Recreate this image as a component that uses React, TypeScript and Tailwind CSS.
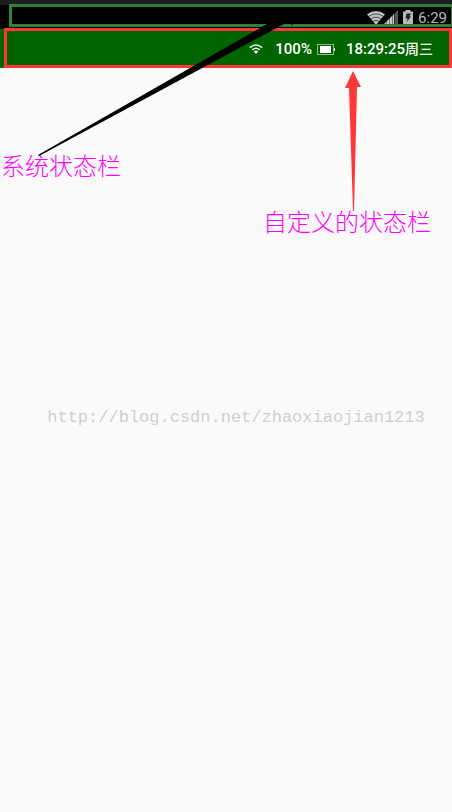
function SystemWifi() {
  return (
    <svg className="h-[14px] w-[18px]" viewBox="0 0 18 14" aria-hidden="true">
      <path d="M0 3.2Q9-3 18 3.2L9 14Z" fill="#c0c0c0" />
      <path
        d="M1.5 5.4Q9 .4 16.5 5.4M3.6 8Q9 4.2 14.4 8M5.6 10.4Q9 8 12.4 10.4"
        fill="none"
        stroke="#222"
        strokeWidth="0.7"
      />
    </svg>
  );
}

function SystemSignal() {
  return (
    <svg className="-ml-px h-[15px] w-[14px]" viewBox="0 0 14 15" aria-hidden="true">
      <path d="M0 15V14L2 12V15ZM3 15V11L5 9V15ZM6 15V8L8 6V15ZM9 15V5L10 4V15Z" fill="#c8c8c8" />
      <path d="M2 15V12L3 11V15ZM5 15V9L6 8V15ZM8 15V6L9 5V15Z" fill="#777" />
      <path d="M10.500 15V3.500L14 0V15Z" fill="#555" />
    </svg>
  );
}

function SystemBattery() {
  return (
    <svg className="h-[15px] w-[10px]" viewBox="0 0 10 15" aria-hidden="true">
      <path d="M0 1.500H2.500V0H7.500V1.500H10V15H0Z" fill="#b8b8b8" />
      <path d="M3.500 3.500H8L6.500 6.500H8L3.800 12L4.600 8.400H2.500Z" fill="#222" />
    </svg>
  );
}

function SystemBar() {
  return (
    <div className="flex h-[29px] flex-col bg-black">
      <div className="h-[5px] bg-[#1c1c22]" />
      <div className="flex h-6 items-center justify-end pt-px pr-[5px] text-[#b8b8b8]">
        <SystemWifi />
        <SystemSignal />
        <span className="ml-[5px] flex">
          <SystemBattery />
        </span>
        <span className="ml-[5px] text-[15px] leading-6">6:29</span>
      </div>
    </div>
  );
}

function CustomBar() {
  return (
    <div className="flex h-[39px] items-center justify-end bg-[#006400] pt-px pr-[19px] text-[15px] font-medium text-white">
      <svg className="mr-3 h-[10px] w-[14px]" viewBox="0 0 14 10" aria-hidden="true">
        <path
          d="M.8 3.600Q7-1.600 13.200 3.600M3.200 6Q7 2.600 10.800 6"
          fill="none"
          stroke="#e8f2e8"
          strokeWidth="1.500"
        />
        <path d="M4.800 7.500Q7 5.700 9.200 7.500L7 10Z" fill="#fff" />
      </svg>
      <span>100%</span>
      <svg className="mr-[11px] ml-[5px] h-[11px] w-[18px]" viewBox="0 0 18 11" aria-hidden="true">
        <rect x="0.500" y="0.500" width="16" height="10" fill="none" stroke="#8dba8d" />
        <rect x="3" y="2" width="11" height="7" fill="#fff" />
        <rect x="17" y="4" width="1" height="3" fill="#fff" />
      </svg>
      <span>
        18:29:25<span className="text-sm">周三</span>
      </span>
    </div>
  );
}

export default function App() {
  return (
    <main className="relative min-h-screen overflow-hidden bg-[#fafafa] font-[Roboto,'Noto_Sans_CJK_SC',sans-serif]">
      <SystemBar />
      <CustomBar />

      {/* frames around the two bars */}
      <div className="absolute top-1 -right-[2px] left-[9px] h-[23px] border-3 border-[#328232]" />
      <div className="absolute top-7 right-0 left-1 h-10 border-3 border-[#ff3737]" />

      {/* pointers */}
      <svg className="absolute top-0 left-0 h-[160px] w-[300px]" viewBox="0 0 300 160" aria-hidden="true">
        <path d="M38 155L267 24L274 20H291L284 24L39 156Z" fill="#000" />
        <path d="M290 23H294L292 25Z" fill="#000" />
      </svg>
      <svg className="absolute top-[71px] right-[91px] h-[140px] w-4" viewBox="0 0 16 140" aria-hidden="true">
        <path d="M8 0L16 16H12L9 140H8L4 17H0Z" fill="#ff3737" />
      </svg>

      <div className="text-2xl leading-8 font-light text-[#ff00ff]">
        <p className="mt-[83px] pl-px">系统状态栏</p>
        <p className="mt-6 pr-[21px] text-right">自定义的状态栏</p>
      </div>

      <p className="mt-[167px] pl-5 text-center font-['Liberation_Mono',monospace] text-[17px] leading-6 whitespace-nowrap text-[#d0d0ca]">
        http://blog.csdn.net/zhaoxiaojian1213
      </p>
    </main>
  );
}
